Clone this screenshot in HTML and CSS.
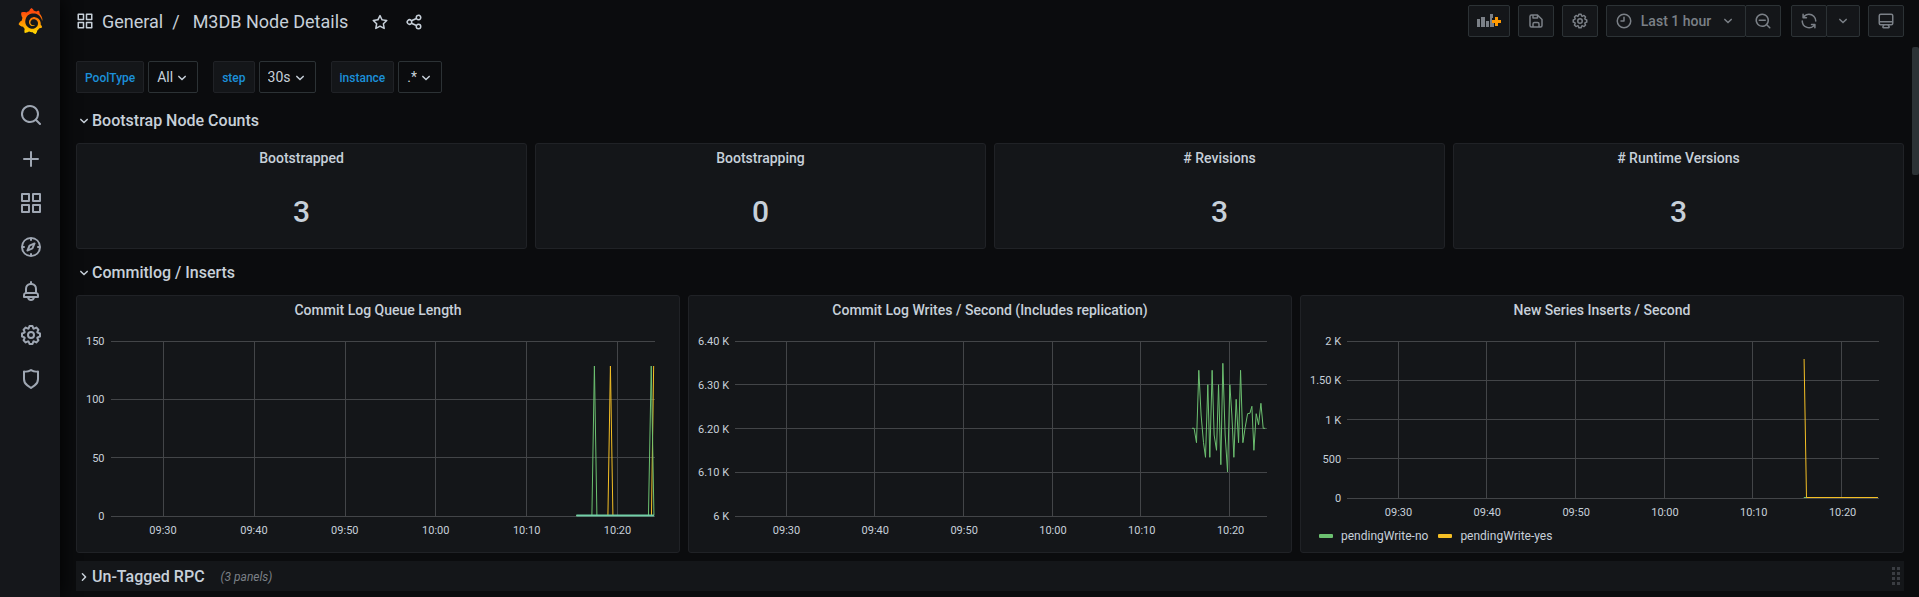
FILE: index.html
```html
<!DOCTYPE html>
<html lang="en">
<head>
<meta charset="utf-8">
<meta name="viewport" content="width=device-width, initial-scale=1">
<title>M3DB Node Details</title>
<link rel="stylesheet" href="styles.css">
</head>
<body>
<svg class="sprite" aria-hidden="true">
  <symbol id="search" viewBox="0 0 24 24"><path d="M21.71,20.29,18,16.61A9,9,0,1,0,16.61,18l3.68,3.68a1,1,0,0,0,1.42,0A1,1,0,0,0,21.71,20.29ZM11,18a7,7,0,1,1,7-7A7,7,0,0,1,11,18Z"/></symbol>
  <symbol id="plus" viewBox="0 0 24 24"><path d="M19,11H13V5a1,1,0,0,0-2,0v6H5a1,1,0,0,0,0,2h6v6a1,1,0,0,0,2,0V13h6a1,1,0,0,0,0-2Z"/></symbol>
  <symbol id="apps" viewBox="0 0 24 24"><path d="M10,13H3a1,1,0,0,0-1,1v7a1,1,0,0,0,1,1h7a1,1,0,0,0,1-1V14A1,1,0,0,0,10,13ZM9,20H4V15H9ZM21,2H14a1,1,0,0,0-1,1v7a1,1,0,0,0,1,1h7a1,1,0,0,0,1-1V3A1,1,0,0,0,21,2ZM20,9H15V4h5Zm1,4H14a1,1,0,0,0-1,1v7a1,1,0,0,0,1,1h7a1,1,0,0,0,1-1V14A1,1,0,0,0,21,13Zm-1,7H15V15h5ZM10,2H3A1,1,0,0,0,2,3v7a1,1,0,0,0,1,1h7a1,1,0,0,0,1-1V3A1,1,0,0,0,10,2ZM9,9H4V4H9Z"/></symbol>
  <symbol id="compass" viewBox="0 0 24 24"><path d="M12,2A10,10,0,1,0,22,12,10,10,0,0,0,12,2Zm1,17.93V19a1,1,0,0,0-2,0v.93A8,8,0,0,1,4.07,13H5a1,1,0,0,0,0-2H4.07A8,8,0,0,1,11,4.07V5a1,1,0,0,0,2,0V4.07A8,8,0,0,1,19.93,11H19a1,1,0,0,0,0,2h.93A8,8,0,0,1,13,19.93ZM15.14,7.55l-5,2.12a1,1,0,0,0-.52.52l-2.12,5a1,1,0,0,0,.21,1.1,1,1,0,0,0,.7.29.93.93,0,0,0,.4-.09l5-2.12a1,1,0,0,0,.52-.52l2.12-5a1,1,0,0,0-1.31-1.31Zm-2.49,5.1-2.28,1,1-2.28,2.28-1Z"/></symbol>
  <symbol id="bell" viewBox="0 0 24 24"><path d="M18,13.18V10a6,6,0,0,0-5-5.91V3a1,1,0,0,0-2,0V4.09A6,6,0,0,0,6,10v3.18A3,3,0,0,0,4,16v2a1,1,0,0,0,1,1H8.14a4,4,0,0,0,7.72,0H19a1,1,0,0,0,1-1V16A3,3,0,0,0,18,13.18ZM8,10a4,4,0,0,1,8,0v3H8Zm4,10a2,2,0,0,1-1.72-1h3.44A2,2,0,0,1,12,20Zm6-3H6V16a1,1,0,0,1,1-1H17a1,1,0,0,1,1,1Z"/></symbol>
  <symbol id="cog" viewBox="0 0 24 24"><path d="M21.32,9.55l-1.89-.63.89-1.78A1,1,0,0,0,20.13,6L18,3.87a1,1,0,0,0-1.15-.19l-1.78.89-.63-1.89A1,1,0,0,0,13.5,2h-3a1,1,0,0,0-.95.68L8.92,4.57,7.14,3.68A1,1,0,0,0,6,3.87L3.87,6a1,1,0,0,0-.19,1.15l.89,1.78-1.89.63A1,1,0,0,0,2,10.5v3a1,1,0,0,0,.68.95l1.89.63-.89,1.78A1,1,0,0,0,3.87,18L6,20.13a1,1,0,0,0,1.15.19l1.78-.89.63,1.89a1,1,0,0,0,.95.68h3a1,1,0,0,0,.95-.68l.63-1.89,1.78.89A1,1,0,0,0,18,20.13L20.13,18a1,1,0,0,0,.19-1.15l-.89-1.78,1.89-.63A1,1,0,0,0,22,13.5v-3A1,1,0,0,0,21.32,9.55ZM20,12.78l-1.2.4A2,2,0,0,0,17.64,16l.57,1.14-1.1,1.1L16,17.64a2,2,0,0,0-2.79,1.16l-.4,1.2H11.22l-.4-1.2A2,2,0,0,0,8,17.64l-1.14.57-1.1-1.1L6.36,16A2,2,0,0,0,5.2,13.18L4,12.78V11.22l1.2-.4A2,2,0,0,0,6.36,8L5.79,6.89l1.1-1.1L8,6.36A2,2,0,0,0,10.82,5.2l.4-1.2h1.56l.4,1.2A2,2,0,0,0,16,6.36l1.14-.57,1.1,1.1L17.64,8a2,2,0,0,0,1.16,2.79l1.2.4ZM12,8a4,4,0,1,0,4,4A4,4,0,0,0,12,8Zm0,6a2,2,0,1,1,2-2A2,2,0,0,1,12,14Z"/></symbol>
  <symbol id="shield" viewBox="0 0 24 24"><path d="M19.63,3.65a1,1,0,0,0-.84-.2,8,8,0,0,1-6.22-1.27,1,1,0,0,0-1.14,0A8,8,0,0,1,5.21,3.45a1,1,0,0,0-.84.2A1,1,0,0,0,4,4.43v7.45a9,9,0,0,0,3.77,7.33l3.65,2.6a1,1,0,0,0,1.16,0l3.65-2.6A9,9,0,0,0,20,11.88V4.43A1,1,0,0,0,19.63,3.65ZM18,11.88a7,7,0,0,1-2.93,5.7L12,19.77,8.93,17.58A7,7,0,0,1,6,11.88V5.58a10,10,0,0,0,6-1.39,10,10,0,0,0,6,1.39Z"/></symbol>
  <symbol id="star" viewBox="0 0 24 24"><path d="M22,9.67A1,1,0,0,0,21.14,9l-5.69-.83L12.9,3a1,1,0,0,0-1.8,0L8.55,8.16,2.86,9a1,1,0,0,0-.81.68,1,1,0,0,0,.25,1l4.13,4-1,5.68A1,1,0,0,0,6.9,21.44L12,18.77l5.1,2.67a.93.93,0,0,0,.46.12,1,1,0,0,0,.59-.19,1,1,0,0,0,.4-1l-1-5.68,4.13-4A1,1,0,0,0,22,9.67Zm-6.15,4a1,1,0,0,0-.29.88l.72,4.2-3.76-2a1.06,1.06,0,0,0-.94,0l-3.76,2,.72-4.2a1,1,0,0,0-.29-.88l-3-3,4.21-.61a1,1,0,0,0,.76-.55L12,5.7l1.88,3.82a1,1,0,0,0,.76.55l4.21.61Z"/></symbol>
  <symbol id="share" viewBox="0 0 24 24"><path d="M18,14a4,4,0,0,0-3.08,1.48l-5.1-2.35a3.64,3.64,0,0,0,0-2.26l5.1-2.35A4,4,0,1,0,14,6a4.17,4.17,0,0,0,.07.71L8.79,9.14a4,4,0,1,0,0,5.72l5.28,2.43A4.17,4.17,0,0,0,14,18a4,4,0,1,0,4-4ZM18,4a2,2,0,1,1-2,2A2,2,0,0,1,18,4ZM6,14a2,2,0,1,1,2-2A2,2,0,0,1,6,14Zm12,6a2,2,0,1,1,2-2A2,2,0,0,1,18,20Z"/></symbol>
  <symbol id="save" viewBox="0 0 24 24"><path d="m20.71 9.29-6-6a1 1 0 0 0-.32-.21A1.09 1.09 0 0 0 14 3H6a3 3 0 0 0-3 3v12a3 3 0 0 0 3 3h12a3 3 0 0 0 3-3v-8a1 1 0 0 0-.29-.71ZM9 5h4v2H9Zm6 14H9v-3a1 1 0 0 1 1-1h4a1 1 0 0 1 1 1Zm4-1a1 1 0 0 1-1 1h-1v-3a3 3 0 0 0-3-3h-4a3 3 0 0 0-3 3v3H6a1 1 0 0 1-1-1V6a1 1 0 0 1 1-1h1v3a1 1 0 0 0 1 1h6a1 1 0 0 0 1-1V6.41l4 4Z"/></symbol>
  <symbol id="clock" viewBox="0 0 24 24"><path d="M12,2A10,10,0,1,0,22,12,10,10,0,0,0,12,2Zm0,18a8,8,0,1,1,8-8A8,8,0,0,1,12,20ZM12,6a1,1,0,0,0-1,1v4H8a1,1,0,0,0,0,2h4a1,1,0,0,0,1-1V7A1,1,0,0,0,12,6Z"/></symbol>
  <symbol id="angle-down" viewBox="0 0 24 24"><path d="M17,9.17a1,1,0,0,0-1.41,0L12,12.71,8.46,9.17a1,1,0,0,0-1.41,0,1,1,0,0,0,0,1.42l4.24,4.24a1,1,0,0,0,1.42,0L17,10.59A1,1,0,0,0,17,9.17Z"/></symbol>
  <symbol id="angle-right" viewBox="0 0 24 24"><path transform="rotate(-90 12 12)" d="M17,9.17a1,1,0,0,0-1.41,0L12,12.71,8.46,9.17a1,1,0,0,0-1.41,0,1,1,0,0,0,0,1.42l4.24,4.24a1,1,0,0,0,1.42,0L17,10.59A1,1,0,0,0,17,9.17Z"/></symbol>
  <symbol id="zoom-out" viewBox="0 0 24 24"><path d="M21.71,20.29,18,16.61A9,9,0,1,0,16.61,18l3.68,3.68a1,1,0,0,0,1.42,0A1,1,0,0,0,21.71,20.29ZM11,18a7,7,0,1,1,7-7A7,7,0,0,1,11,18ZM15,10H7a1,1,0,0,0,0,2h8a1,1,0,0,0,0-2Z"/></symbol>
  <symbol id="sync" viewBox="0 0 24 24"><path d="M19.91,15.51H15.38a1,1,0,0,0,0,2h2.4A8,8,0,0,1,4,12a1,1,0,0,0-2,0,10,10,0,0,0,16.88,7.23V21a1,1,0,0,0,2,0V16.5A1,1,0,0,0,19.91,15.51ZM12,2A10,10,0,0,0,5.12,4.77V3a1,1,0,0,0-2,0V7.5a1,1,0,0,0,1,1h4.5a1,1,0,0,0,0-2H6.22A8,8,0,0,1,20,12a1,1,0,0,0,2,0A10,10,0,0,0,12,2Z"/></symbol>
  <symbol id="monitor" viewBox="0 0 24 24"><path d="M19,2H5A3,3,0,0,0,2,5V15a3,3,0,0,0,3,3H7.64l-.58,1a2,2,0,0,0,0,2,2,2,0,0,0,1.75,1h6.46A2,2,0,0,0,17,21a2,2,0,0,0,0-2l-.59-1H19a3,3,0,0,0,3-3V5A3,3,0,0,0,19,2ZM8.77,20,10,18H14l1.2,2ZM20,15a1,1,0,0,1-1,1H5a1,1,0,0,1-1-1V14H20Zm0-3H4V5A1,1,0,0,1,5,4H19a1,1,0,0,1,1,1Z"/></symbol>
  <symbol id="gridlines" overflow="visible">
    <line x1="9.65%" x2="9.65%" y1="0" y2="100%"/><line x1="26.3%" x2="26.3%" y1="0" y2="100%"/><line x1="43%" x2="43%" y1="0" y2="100%"/><line x1="59.6%" x2="59.6%" y1="0" y2="100%"/><line x1="76.3%" x2="76.3%" y1="0" y2="100%"/><line x1="93%" x2="93%" y1="0" y2="100%"/>
  </symbol>
</svg>
<div class="app">
  <nav class="sidebar" aria-label="Main">
    <a class="logo" href="#" aria-label="Home">
      <svg viewBox="0 0 351 365" width="25" height="26">
        <defs><linearGradient id="flame" x1="0" y1="1" x2="0" y2="0"><stop offset="0.05" stop-color="#ffd500"/><stop offset="0.4" stop-color="#ff9900"/><stop offset="0.85" stop-color="#ff4a0d"/></linearGradient></defs>
        <path fill="url(#flame)" d="M342,161.2c-0.6-6.1-1.6-13.1-3.6-20.9c-2-7.7-5-16.2-9.4-25c-4.4-8.8-10.1-17.9-17.5-26.8c-2.9-3.5-6.1-6.9-9.5-10.2c5.1-20.3-6.2-37.9-6.2-37.9c-19.5-1.2-31.9,6.1-36.5,9.4c-0.8-0.3-1.5-0.7-2.3-1c-3.3-1.3-6.7-2.6-10.3-3.7c-3.5-1.1-7.1-2.1-10.8-3c-3.7-0.9-7.4-1.6-11.2-2.2c-0.7-0.1-1.3-0.2-2-0.3c-8.5-27.2-32.9-38.6-32.9-38.6c-27.3,17.3-32.4,41.5-32.4,41.5s-0.1,0.5-0.3,1.4c-1.5,0.4-3,0.9-4.5,1.3c-2.1,0.6-4.2,1.4-6.2,2.2c-2.1,0.8-4.1,1.6-6.2,2.5c-4.1,1.8-8.2,3.8-12.2,6c-3.9,2.2-7.7,4.6-11.4,7.1c-0.5-0.2-1-0.4-1-0.4c-37.8-14.4-71.3,2.9-71.3,2.9c-3.1,40.2,15.1,65.5,18.7,70.1c-0.9,2.5-1.7,5-2.5,7.5c-2.8,9.1-4.9,18.4-6.2,28.1c-0.2,1.4-0.4,2.8-0.5,4.2C18.8,192.7,8.5,228,8.5,228c29.1,33.5,63.1,35.6,63.1,35.6c0,0,0.1-0.1,0.1-0.1c4.3,7.7,9.3,15,14.9,21.9c2.4,2.9,4.8,5.6,7.4,8.3c-10.6,30.4,1.5,55.6,1.5,55.6c32.4,1.2,53.7-14.2,58.2-17.7c3.2,1.1,6.5,2.1,9.8,2.9c10,2.6,20.2,4.1,30.4,4.5c2.5,0.1,5.1,0.2,7.6,0.1l1.2,0l0.8,0l1.6,0l1.6-0.1l0,0.1c15.3,21.8,42.1,24.9,42.1,24.9c19.1-20.1,20.2-40.1,20.2-44.4l0,0c0,0,0-0.1,0-0.3c0-0.4,0-0.6,0-0.6l0,0c0-0.3,0-0.6,0-0.9c4-2.8,7.8-5.8,11.4-9.1c7.6-6.9,14.3-14.8,19.9-23.3c0.5-0.8,1-1.6,1.5-2.4c21.6,1.2,36.9-13.4,36.9-13.4c-3.6-22.5-16.4-33.5-19.1-35.6l0,0c0,0-0.1-0.1-0.3-0.2c-0.2-0.1-0.2-0.2-0.2-0.2c0,0,0,0,0,0c-0.1-0.1-0.3-0.2-0.5-0.3c0.1-1.4,0.2-2.7,0.3-4.1c0.2-2.4,0.2-4.9,0.2-7.3l0-1.8l0-0.9l0-0.5c0-0.6,0-0.4,0-0.6l-0.1-1.5l-0.1-2c0-0.7-0.1-1.3-0.2-1.9c-0.1-0.6-0.1-1.3-0.2-1.9l-0.2-1.9l-0.3-1.9c-0.4-2.5-0.8-4.9-1.4-7.4c-2.3-9.7-6.1-18.9-11-27.2c-5-8.3-11.2-15.6-18.3-21.8c-7-6.2-14.9-11.2-23.1-14.9c-8.3-3.7-16.9-6.1-25.5-7.2c-4.3-0.6-8.6-0.8-12.9-0.7l-1.6,0l-0.4,0c-0.1,0-0.6,0-0.5,0l-0.7,0l-1.6,0.1c-0.6,0-1.2,0.1-1.7,0.1c-2.2,0.2-4.4,0.5-6.5,0.9c-8.6,1.6-16.7,4.7-23.8,9c-7.1,4.3-13.3,9.6-18.3,15.6c-5,6-8.9,12.7-11.6,19.6c-2.7,6.9-4.2,14.1-4.6,21c-0.1,1.7-0.1,3.5-0.1,5.2c0,0.4,0,0.9,0,1.3l0.1,1.4c0.1,0.8,0.1,1.7,0.2,2.5c0.3,3.5,1,6.9,1.9,10.1c1.9,6.5,4.9,12.4,8.6,17.4c3.7,5,8.2,9.1,12.9,12.4c4.7,3.2,9.8,5.5,14.8,7c5,1.5,10,2.1,14.7,2.1c0.6,0,1.2,0,1.7,0c0.3,0,0.6,0,0.9,0c0.3,0,0.6,0,0.9-0.1c0.5,0,1-0.1,1.5-0.1c0.1,0,0.3,0,0.4-0.1l0.5-0.1c0.3,0,0.6-0.1,0.9-0.1c0.6-0.1,1.1-0.2,1.7-0.3c0.6-0.1,1.1-0.2,1.6-0.4c1.1-0.2,2.1-0.6,3.1-0.9c2-0.7,4-1.5,5.7-2.4c1.8-0.9,3.4-2,5-3c0.4-0.3,0.9-0.6,1.3-1c1.6-1.3,1.9-3.7,0.6-5.3c-1.1-1.4-3.1-1.8-4.7-0.9c-0.4,0.2-0.8,0.4-1.2,0.6c-1.4,0.7-2.8,1.3-4.3,1.8c-1.5,0.5-3.1,0.9-4.7,1.2c-0.8,0.1-1.6,0.2-2.5,0.3c-0.4,0-0.8,0.1-1.3,0.1c-0.4,0-0.9,0-1.2,0c-0.4,0-0.8,0-1.2,0c-0.5,0-1,0-1.5-0.1c0,0-0.3,0-0.1,0l-0.2,0l-0.3,0c-0.2,0-0.5,0-0.7-0.1c-0.5-0.1-0.9-0.1-1.4-0.2c-3.7-0.5-7.4-1.6-10.9-3.2c-3.6-1.6-7-3.8-10.1-6.6c-3.1-2.8-5.8-6.1-7.9-9.9c-2.1-3.8-3.6-8-4.3-12.4c-0.3-2.2-0.5-4.5-0.4-6.7c0-0.6,0.1-1.2,0.1-1.8c0,0.2,0-0.1,0-0.1l0-0.2l0-0.5c0-0.3,0.1-0.6,0.1-0.9c0.1-1.2,0.3-2.4,0.5-3.6c1.7-9.6,6.5-19,13.9-26.1c1.9-1.8,3.9-3.4,6-4.9c2.1-1.5,4.4-2.8,6.8-3.9c2.4-1.1,4.8-2,7.4-2.7c2.5-0.7,5.1-1.1,7.8-1.4c1.3-0.1,2.6-0.2,4-0.2c0.4,0,0.6,0,0.9,0l1.1,0l0.7,0c0.3,0,0,0,0.1,0l0.3,0l1.1,0.1c2.9,0.2,5.7,0.6,8.5,1.3c5.6,1.2,11.1,3.3,16.2,6.1c10.2,5.7,18.9,14.5,24.2,25.1c2.7,5.3,4.6,11,5.5,16.9c0.2,1.5,0.4,3,0.5,4.5l0.1,1.1l0.1,1.1c0,0.4,0,0.8,0,1.1c0,0.4,0,0.8,0,1.1l0,1l0,1.1c0,0.7-0.1,1.9-0.1,2.6c-0.1,1.6-0.3,3.3-0.5,4.9c-0.2,1.6-0.5,3.2-0.8,4.8c-0.3,1.6-0.7,3.2-1.1,4.7c-0.8,3.1-1.8,6.2-3,9.3c-2.4,6-5.6,11.8-9.4,17.1c-7.7,10.6-18.2,19.2-30.2,24.7c-6,2.7-12.3,4.7-18.8,5.7c-3.2,0.6-6.5,0.9-9.8,1l-0.6,0l-0.5,0l-1.1,0l-1.6,0l-0.8,0c0.4,0-0.1,0-0.1,0l-0.3,0c-1.8,0-3.5-0.1-5.3-0.3c-7-0.5-13.9-1.8-20.7-3.7c-6.7-1.9-13.2-4.6-19.4-7.8c-12.3-6.6-23.4-15.6-32-26.5c-4.3-5.4-8.1-11.3-11.2-17.4c-3.1-6.1-5.6-12.6-7.4-19.1c-1.8-6.6-2.9-13.3-3.4-20.1l-0.1-1.3l0-0.3l0-0.3l0-0.6l0-1.1l0-0.3l0-0.4l0-0.8l0-1.6l0-0.3c0,0,0,0.1,0-0.1l0-0.6c0-0.8,0-1.7,0-2.5c0.1-3.3,0.4-6.8,0.8-10.2c0.4-3.4,1-6.9,1.7-10.3c0.7-3.4,1.5-6.8,2.5-10.2c1.9-6.7,4.3-13.2,7.1-19.3c5.7-12.2,13.1-23.1,22-31.8c2.2-2.2,4.5-4.2,6.9-6.2c2.4-1.9,4.9-3.7,7.5-5.4c2.5-1.7,5.2-3.2,7.9-4.6c1.3-0.7,2.7-1.4,4.1-2c0.7-0.3,1.4-0.6,2.1-0.9c0.7-0.3,1.4-0.6,2.1-0.9c2.8-1.2,5.7-2.2,8.7-3.1c0.7-0.2,1.5-0.4,2.2-0.7c0.7-0.2,1.5-0.4,2.2-0.6c1.5-0.4,3-0.8,4.5-1.1c0.7-0.2,1.5-0.3,2.3-0.5c0.8-0.2,1.5-0.3,2.3-0.5c0.8-0.1,1.5-0.3,2.3-0.4l1.1-0.2l1.2-0.2c0.8-0.1,1.5-0.2,2.3-0.3c0.9-0.1,1.7-0.2,2.6-0.3c0.7-0.1,1.9-0.2,2.6-0.3c0.5-0.1,1.1-0.1,1.6-0.2l1.1-0.1l0.5-0.1l0.6,0c0.9-0.1,1.7-0.1,2.6-0.2l1.3-0.1c0,0,0.5,0,0.1,0l0.3,0l0.6,0c0.7,0,1.5-0.1,2.2-0.1c2.9-0.1,5.9-0.1,8.8,0c5.8,0.2,11.5,0.9,17,1.9c11.1,2.1,21.5,5.6,31,10.3c9.5,4.6,17.9,10.3,25.3,16.5c0.5,0.4,0.9,0.8,1.4,1.2c0.4,0.4,0.9,0.8,1.3,1.2c0.9,0.8,1.7,1.6,2.6,2.4c0.9,0.8,1.7,1.6,2.5,2.4c0.8,0.8,1.6,1.6,2.4,2.5c3.1,3.3,6,6.6,8.6,10c5.2,6.7,9.4,13.5,12.7,19.9c0.2,0.4,0.4,0.8,0.6,1.2c0.2,0.4,0.4,0.8,0.6,1.2c0.4,0.8,0.8,1.6,1.1,2.4c0.4,0.8,0.7,1.5,1.1,2.3c0.3,0.8,0.7,1.5,1,2.3c1.2,3,2.4,5.9,3.3,8.6c1.5,4.4,2.6,8.3,3.5,11.7c0.3,1.4,1.6,2.3,3,2.1c1.5-0.1,2.6-1.3,2.6-2.8C342.6,170.4,342.5,166.1,342,161.2z"/>
      </svg>
    </a>
    <a class="nav-item" href="#" aria-label="Search"><svg class="icon-lg"><use href="#search"/></svg></a>
    <a class="nav-item" href="#" aria-label="Create"><svg class="icon-lg"><use href="#plus"/></svg></a>
    <a class="nav-item" href="#" aria-label="Dashboards"><svg class="icon-lg"><use href="#apps"/></svg></a>
    <a class="nav-item" href="#" aria-label="Explore"><svg class="icon-lg"><use href="#compass"/></svg></a>
    <a class="nav-item" href="#" aria-label="Alerting"><svg class="icon-lg"><use href="#bell"/></svg></a>
    <a class="nav-item" href="#" aria-label="Configuration"><svg class="icon-lg"><use href="#cog"/></svg></a>
    <a class="nav-item" href="#" aria-label="Server admin"><svg class="icon-lg"><use href="#shield"/></svg></a>
  </nav>

  <main class="main">
    <header class="topbar">
      <svg class="icon-md"><use href="#apps"/></svg>
      <h1 class="crumbs"><a href="#">General</a><span class="slash">/</span><a href="#">M3DB Node Details</a></h1>
      <button class="plain" type="button" aria-label="Mark as favorite"><svg class="icon-md"><use href="#star"/></svg></button>
      <button class="plain" type="button" aria-label="Share dashboard"><svg class="icon-md"><use href="#share"/></svg></button>
      <div class="tools">
        <button class="tool tool-add" type="button" aria-label="Add panel">
          <svg width="24" height="14" viewBox="0 0 24 14"><path fill="currentColor" d="M0 5h3v8H0zM4 3h4v10H4zM9 7h3v6H9zM13 0h3v4h-1v4h2v5h-4z"/><path fill="#ff9900" d="M18 3h3v3h3v3h-3v3h-3V9h-3V6h3z"/></svg>
        </button>
        <button class="tool" type="button" aria-label="Save dashboard"><svg class="icon-md"><use href="#save"/></svg></button>
        <button class="tool" type="button" aria-label="Dashboard settings"><svg class="icon-md"><use href="#cog"/></svg></button>
        <div class="group">
          <button class="tool tool-time" type="button"><svg class="icon-md"><use href="#clock"/></svg><span>Last 1 hour</span><svg class="icon-md"><use href="#angle-down"/></svg></button>
          <button class="tool" type="button" aria-label="Zoom out time range"><svg class="icon-md"><use href="#zoom-out"/></svg></button>
        </div>
        <div class="group group-refresh">
          <button class="tool" type="button" aria-label="Refresh dashboard"><svg class="icon-md"><use href="#sync"/></svg></button>
          <button class="tool" type="button" aria-label="Refresh interval"><svg class="icon-md"><use href="#angle-down"/></svg></button>
        </div>
        <button class="tool" type="button" aria-label="Cycle view mode"><svg class="icon-md"><use href="#monitor"/></svg></button>
      </div>
    </header>

    <div class="variables">
      <div class="variable"><label for="pooltype">PoolType</label><span class="picker"><select id="pooltype"><option>All</option></select><svg class="icon-md"><use href="#angle-down"/></svg></span></div>
      <div class="variable"><label for="step">step</label><span class="picker"><select id="step"><option>30s</option></select><svg class="icon-md"><use href="#angle-down"/></svg></span></div>
      <div class="variable"><label for="instance">instance</label><span class="picker"><select id="instance"><option>.*</option></select><svg class="icon-md"><use href="#angle-down"/></svg></span></div>
    </div>

    <div class="dashboard">
      <h2 class="row"><svg class="icon-md"><use href="#angle-down"/></svg>Bootstrap Node Counts</h2>
      <div class="stats">
        <section class="panel"><h3>Bootstrapped</h3><p class="value">3</p></section>
        <section class="panel"><h3>Bootstrapping</h3><p class="value">0</p></section>
        <section class="panel"><h3># Revisions</h3><p class="value">3</p></section>
        <section class="panel"><h3># Runtime Versions</h3><p class="value">3</p></section>
      </div>

      <h2 class="row"><svg class="icon-md"><use href="#angle-down"/></svg>Commitlog / Inserts</h2>
      <div class="graphs">
        <section class="panel">
          <h3>Commit Log Queue Length</h3>
          <div class="chart">
            <div class="y-axis"><span>150</span><span>100</span><span>50</span><span>0</span></div>
            <svg class="plot">
              <g class="grid"><use href="#gridlines" width="100%" height="100%"/><line x2="100%"/><line x2="100%" y1="33.3%" y2="33.3%"/><line x2="100%" y1="66.4%" y2="66.4%"/><line x2="100%" y1="100%" y2="100%"/></g>
              <svg class="series" viewBox="0 0 544 175" preserveAspectRatio="none">
                <polyline class="yellow" points="465,174.5 496.5,174.5 499,25 501.5,174.5 540,174.5 542.2,25"/>
                <polyline class="green" points="465,174.5 480.5,174.5 483,25 485.5,174.5 537,174.5 539.8,25 542.5,174.5"/>
                <line class="teal" x1="465" x2="542.5" y1="174.5" y2="174.5"/>
              </svg>
            </svg>
            <div class="x-axis"><span>09:30</span><span>09:40</span><span>09:50</span><span>10:00</span><span>10:10</span><span>10:20</span></div>
          </div>
        </section>
        <section class="panel">
          <h3>Commit Log Writes / Second (Includes replication)</h3>
          <div class="chart">
            <div class="y-axis"><span>6.40 K</span><span>6.30 K</span><span>6.20 K</span><span>6.10 K</span><span>6 K</span></div>
            <svg class="plot">
              <g class="grid"><use href="#gridlines" width="100%" height="100%"/><line x2="100%"/><line x2="100%" y1="25%" y2="25%"/><line x2="100%" y1="50%" y2="50%"/><line x2="100%" y1="75%" y2="75%"/><line x2="100%" y1="100%" y2="100%"/></g>
              <svg class="series" viewBox="0 0 531 175" preserveAspectRatio="none">
                <polyline class="green" points="456.3,87.3 458.3,87.3 460.7,101.7 463,29.3 465.3,74 467.7,101.7 469.7,116.3 472,43.7 474,116.3 476.3,29.3 478.3,94 480.7,109.3 482.7,43.7 485,123.7 487,22.3 489.3,94 491.7,131 494,43.7 496,74 498,116.3 500.3,58.3 502.7,101.7 504.7,29.3 507,101.7 509.3,86.3 511.7,72.7 514,72.3 516,65.3 518,109.3 520.3,72.7 522.7,83.7 525,62.3 527.3,87.3 529.3,87.3"/>
              </svg>
            </svg>
            <div class="x-axis"><span>09:30</span><span>09:40</span><span>09:50</span><span>10:00</span><span>10:10</span><span>10:20</span></div>
          </div>
        </section>
        <section class="panel">
          <h3>New Series Inserts / Second</h3>
          <div class="chart chart-short">
            <div class="y-axis"><span>2 K</span><span>1.50 K</span><span>1 K</span><span>500</span><span>0</span></div>
            <svg class="plot">
              <g class="grid"><use href="#gridlines" width="100%" height="100%"/><line x2="100%"/><line x2="100%" y1="25%" y2="25%"/><line x2="100%" y1="50%" y2="50%"/><line x2="100%" y1="75%" y2="75%"/><line x2="100%" y1="100%" y2="100%"/></g>
              <svg class="series" viewBox="0 0 531 157" preserveAspectRatio="none">
                <line class="green" x1="456" x2="530" y1="156.5" y2="156.5"/>
                <polyline class="yellow" points="456.3,18 458.7,156.5 530,156.5"/>
              </svg>
            </svg>
            <div class="x-axis"><span>09:30</span><span>09:40</span><span>09:50</span><span>10:00</span><span>10:10</span><span>10:20</span></div>
          </div>
          <ul class="legend">
            <li><i class="swatch swatch-green"></i>pendingWrite-no</li>
            <li><i class="swatch swatch-yellow"></i>pendingWrite-yes</li>
          </ul>
        </section>
      </div>

      <h2 class="row row-collapsed"><svg class="icon-md"><use href="#angle-right"/></svg>Un-Tagged RPC<small>(3 panels)</small><span class="drag"></span></h2>
    </div>
  </main>
  <div class="scrollbar"></div>
</div>
</body>
</html>
```

FILE: styles.css
```css
* { box-sizing: border-box; }

body {
  margin: 0;
  background: #0b0c0e;
  color: #c7d0d9;
  font: 14px/20px Roboto, "Liberation Sans", sans-serif;
}

h1, h2, h3, p, ul { margin: 0; padding: 0; }
a { color: inherit; text-decoration: none; }
button, select { font: inherit; color: inherit; }
svg { display: block; flex: none; }

.sprite { position: absolute; width: 0; height: 0; }
.icon-md { width: 18px; height: 18px; fill: currentColor; }
.icon-lg { width: 24px; height: 24px; fill: currentColor; }

.app { display: flex; min-height: 100vh; position: relative; }

/* Sidebar */
.sidebar {
  flex: none;
  width: 60px;
  display: flex;
  flex-direction: column;
  align-items: center;
  padding: 8px 0 0 2px;
  background: #15171b;
  box-shadow: 0 0 20px #000;
  color: #9fa7b3;
}
.logo { margin: 0 2px 59px 0; }
.nav-item { height: 44px; padding-top: 10px; }

/* Page */
.main { flex: 1; min-width: 0; padding: 5px 15px 6px 16px; }

.topbar { display: flex; align-items: center; height: 32px; }
.crumbs {
  display: flex;
  margin: 0 13px 0 8px;
  padding-top: 2px;
  font-size: 18px;
  font-weight: 400;
  line-height: 24px;
}
.slash { margin: 0 13px 0 9px; }
.plain { display: flex; padding: 2px 0 0; margin-left: 10px; border: 0; background: none; }
.plain + .plain { margin-left: 16px; }

.tools { display: flex; gap: 8px; margin-left: auto; color: #7b8087; }
.group { display: flex; }
.group-refresh { margin-left: 2px; }
.tool {
  display: flex;
  align-items: center;
  justify-content: center;
  width: 36px;
  height: 32px;
  padding: 0;
  border: 1px solid #2c3235;
  border-radius: 2px;
  background: #141619;
}
.tool-add { width: 42px; }
.tool-time { width: 140px; gap: 8px; font-weight: 500; }
.group .tool + .tool { margin-left: -1px; }
.group-refresh .tool + .tool { width: 34px; }

.variables { display: flex; gap: 15px; margin-top: 24px; }
.variable { display: flex; gap: 4px; }
.variable label {
  height: 32px;
  padding: 0 8px;
  border: 1px solid #202226;
  border-radius: 2px;
  background: #141619;
  color: #1b90d9;
  font-size: 12px;
  font-weight: 500;
  line-height: 32px;
}
.picker { position: relative; }
.picker select {
  height: 32px;
  padding: 0 24px 0 8px;
  border: 1px solid #2c3235;
  border-radius: 2px;
  background: #0b0c0e;
  appearance: none;
}
.picker svg { position: absolute; right: 7px; top: 8px; pointer-events: none; }

/* Dashboard */
.dashboard { display: grid; gap: 8px; margin-top: 12px; }
.row {
  display: flex;
  align-items: center;
  height: 30px;
  padding-top: 2px;
  font-size: 16px;
  font-weight: 500;
}
.row .icon-md { margin: 0 -1px 0 -1px; }
.row-collapsed { background: #141619; }
.row small { margin-left: 16px; color: #7b8087; font-size: 12px; font-weight: 400; font-style: italic; }
.drag {
  width: 8px;
  height: 20px;
  margin: 0 4px 0 auto;
  background: conic-gradient(from 0deg at 3px 3px, transparent 270deg, #3a3d42 0) 0 0 / 5px 5px;
}

.stats { display: grid; grid-template-columns: repeat(4, 1fr); gap: 8px; }
.graphs { display: grid; grid-template-columns: repeat(3, 1fr); gap: 8px; }
.panel {
  min-width: 0;
  border: 1px solid #202226;
  border-radius: 3px;
  background: #141619;
}
.panel h3 { font-size: 14px; font-weight: 500; line-height: 28px; text-align: center; }
.value {
  padding: 20px 0 16px;
  font-size: 30px;
  font-weight: 500;
  line-height: 40px;
  text-align: center;
}

.chart {
  display: grid;
  grid-template-columns: auto 1fr;
  grid-template-rows: 175px auto;
  column-gap: 6px;
  padding: 17px 24px 15px 9px;
  font-size: 11px;
  line-height: 12px;
}
.chart-short { grid-template-rows: 157px auto; padding-bottom: 8px; }
.y-axis {
  display: flex;
  flex-direction: column;
  justify-content: space-between;
  margin: -5px 0 -7px;
  text-align: right;
}
.plot { width: 100%; height: 100%; overflow: visible; }
.series { overflow: visible; }
.series * { fill: none; stroke-width: 1px; vector-effect: non-scaling-stroke; }
.grid { stroke: #434548; stroke-width: 1px; shape-rendering: crispEdges; }
.green { stroke: #6cc070; }
.yellow { stroke: #f4bf25; }
.series .teal { stroke: #72d0a8; stroke-width: 2px; }
.x-axis {
  grid-column: 2;
  display: grid;
  grid-template-columns: repeat(6, 1fr);
  margin: 9px -8px 0 7px;
  text-align: center;
}

.legend {
  display: flex;
  gap: 10px;
  padding: 0 18px 7px;
  font-size: 12px;
  line-height: 18px;
  list-style: none;
}
.legend li { display: flex; align-items: center; gap: 8px; }
.swatch { width: 14px; height: 4px; border-radius: 1px; }
.swatch-green { background: #6cc070; }
.swatch-yellow { background: #f4bf25; }

.scrollbar {
  position: absolute;
  top: 47px;
  right: 0;
  width: 7px;
  height: 128px;
  border-radius: 2px;
  background: #2c3235;
}
```
